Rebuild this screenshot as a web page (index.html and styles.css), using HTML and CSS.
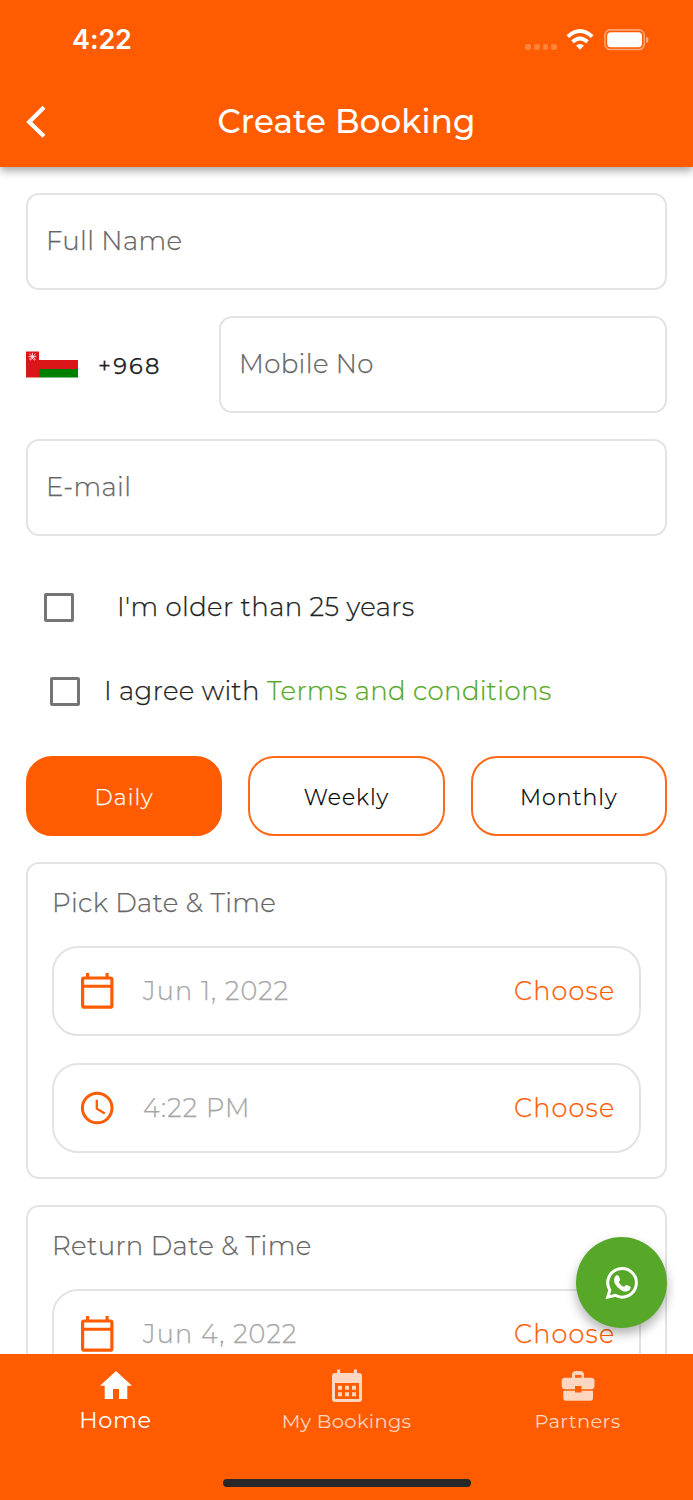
FILE: index.html
```
<!DOCTYPE html>
<html lang="en">
<head>
<meta charset="utf-8">
<title>Create Booking</title>
<link rel="stylesheet" href="styles.css">
</head>
<body>
<div class="phone">
  <header class="header">
    <div class="status">
      <span class="clock">4:22</span>
      <div class="indicators">
        <span class="dots"><i></i><i></i><i></i><i></i></span>
        <svg class="wifi" width="28" height="21" viewBox="0 0 28 21" fill="#fff">
          <path d="M14 20.7 10 16.6Q14 13.4 18 16.6Z"/>
          <path d="M5.2 11.4Q14 3.4 22.8 11.4L20.1 14.2Q14 8.8 7.9 14.2Z"/>
          <path d="M.5 6.2Q14-6 27.5 6.2L24.8 8.9Q14-.7 3.2 8.9Z"/>
        </svg>
        <svg class="battery" width="45" height="22" viewBox="0 0 45 22">
          <rect x=".9" y=".9" width="39.4" height="19.6" rx="5.5" fill="none" stroke="#fff" stroke-opacity=".45" stroke-width="1.6"/>
          <rect x="3.2" y="3.2" width="34.8" height="15" rx="3.6" fill="#fff"/>
          <path d="M42 7.5q2.6 1 2.6 3.3T42 14Z" fill="#fff" fill-opacity=".5"/>
        </svg>
      </div>
    </div>
    <div class="titlebar">
      <svg class="back" width="20" height="34" viewBox="0 0 20 34" fill="none" stroke="#fff" stroke-width="4.2"><path d="M18 2.2 3.200 17 18 31.200"/></svg>
      <h1 class="title"><span>Create Booking</span></h1>
    </div>
  </header>

  <main class="content">
    <div class="field"><span>Full Name</span></div>
    <div class="mobile">
      <svg class="flag" width="52" height="27" viewBox="0 0 52 27">
        <path fill="#db161b" d="M0 .5h13V9h39v9H13v8.500H0z"/>
        <path fill="#008000" d="M13 18h39v8.500H13z"/>
        <g stroke="#fff" stroke-opacity=".85" stroke-width=".9" fill="none"><path d="M3.200 2.800 9.700 8.300M9.700 2.800 3.200 8.300M6.400 1.800v6M2.600 5.500h7.600M4 9.300l2.400-2L9 9.300"/></g>
      </svg>
      <span class="code">+968</span>
      <div class="field mobile-field"><span>Mobile No</span></div>
    </div>
    <div class="field"><span>E-mail</span></div>

    <label class="check check-age"><i class="box"></i><span>I'm older than 25 years</span></label>
    <label class="check check-terms"><i class="box"></i><span class="agree">I agree with</span><span class="terms">Terms and conditions</span></label>

    <div class="periods">
      <button class="period active">Daily</button>
      <button class="period">Weekly</button>
      <button class="period">Monthly</button>
    </div>

    <section class="card">
      <h2 class="card-title">Pick Date &amp; Time</h2>
      <div class="slot">
        <svg class="slot-icon" width="34" height="38" viewBox="0 0 34 38"><rect fill="none" stroke="#ff5b00" stroke-width="3.200" x="2.600" y="6" width="29.300" height="29.200" rx="1.500"/><path fill="#ff5b00" d="M6 1h3.200v4H6zM25.500 1h3.200v4h-3.200zM2.500 12.700h29v3h-29z"/></svg>
        <span class="value">Jun 1, 2022</span><span class="choose">Choose</span>
      </div>
      <div class="slot">
        <svg class="slot-icon" width="34" height="38" viewBox="0 0 34 38" fill="none" stroke="#ff5b00"><circle cx="17.200" cy="19" r="14.800" stroke-width="3"/><path stroke-width="2.300" d="M16.800 10.700v9l8 4.800"/></svg>
        <span class="value">4:22 PM</span><span class="choose">Choose</span>
      </div>
    </section>

    <section class="card">
      <h2 class="card-title">Return Date &amp; Time</h2>
      <div class="slot">
        <svg class="slot-icon" width="34" height="38" viewBox="0 0 34 38"><rect fill="none" stroke="#ff5b00" stroke-width="3.200" x="2.600" y="6" width="29.300" height="29.200" rx="1.500"/><path fill="#ff5b00" d="M6 1h3.200v4H6zM25.500 1h3.200v4h-3.200zM2.500 12.700h29v3h-29z"/></svg>
        <span class="value">Jun 4, 2022</span><span class="choose">Choose</span>
      </div>
    </section>
  </main>

  <nav class="nav">
    <div class="tabs">
      <a class="tab current">
        <svg width="32" height="34" viewBox="0 0 32 34" fill="#fff"><path d="M16 3 32 17.700h-4.700V31H19V21h-6v10H4.700V17.700H0Z"/></svg>
        <span>Home</span>
      </a>
      <a class="tab">
        <svg width="32" height="34" viewBox="0 0 32 34" fill="#ffd6bf"><path fill-rule="evenodd" d="M6 1.500h3.200V5h13.600V1.500H26V5h2q3 0 3 3v23q0 3-3 3H4q-3 0-3-3V8q0-3 3-3h2ZM4 15v16h24V15Z"/><path d="M7 17.700h4v4H7zM14 17.700h4v4h-4zM21 17.700h4v4h-4zM7 24.200h4v4H7zM14 24.200h4v4h-4zM21 24.200h4v4h-4z"/></svg>
        <span>My Bookings</span>
      </a>
      <a class="tab">
        <svg width="34" height="34" viewBox="0 0 34 34" fill="#ffd6bf"><path fill-rule="evenodd" d="M11 9.800V7q0-4 4-4h4q4 0 4 4v2.800h7q3.500 0 3.500 3v5q0 3.500-3.500 3.500h-9.500V18h-6.500v3.300H4.200Q.7 21.300.7 17.800v-5q0-3 3.500-3ZM14 9.800h6.500V7H14Z"/><path d="M2.300 22.700h11.700v1.800h6.500v-1.800H32v7.300q0 2.800-2.800 2.800h-24q-2.900 0-2.900-2.800Z"/></svg>
        <span>Partners</span>
      </a>
    </div>
    <div class="home-bar"></div>
  </nav>

  <div class="fab">
    <svg width="34" height="34" viewBox="0 0 34 34"><path fill="none" stroke="#fff" stroke-width="3" d="M2.700 31.200 4.800 24.100A14.300 14.300 0 1 1 10.200 29.300Z"/><path fill="#fff" d="M11.400 9.300h1.400q.6 0 .9.700l1.400 3.300q.3.700-.2 1.300l-1.200 1.600q1.900 3.400 5.400 4.900l1.500-1.800q.5-.6 1.200-.3l3.300 1.600q.6.300.5 1-.3 3.500-4.500 4-3.700.2-8.200-4.200-4-3.900-4-7.500 0-2.800 2.500-4.600Z"/></svg>
  </div>
</div>
</body>
</html>
```
FILE: styles.css
```
* { box-sizing: border-box; }
body { margin: 0; background: #fff; }
.phone {
  position: relative;
  display: flex;
  flex-direction: column;
  width: 693px;
  height: 1500px;
  overflow: hidden;
  font-family: Montserrat, Inter, sans-serif;
  font-size: 26px;
  font-weight: 300;
  line-height: 32px;
  color: #212121;
  letter-spacing: .36px;
  white-space: nowrap;
}
.header {
  flex: none;
  height: 167px;
  background: #ff5b00;
  color: #fff;
  box-shadow: 0 4px 8px rgba(0, 0, 0, .34);
  z-index: 1;
}
.status {
  display: flex;
  justify-content: space-between;
  height: 78px;
  padding: 24px 44px 0 72px;
}
.clock { font-family: Inter, sans-serif; font-size: 27px; font-weight: 600; letter-spacing: -.1px; }
.indicators { display: flex; align-items: flex-start; padding-top: 5px; }
.dots { display: flex; gap: 3px; margin: 15px 9px 0 0; }
.dots i { width: 5.7px; height: 5.7px; border-radius: 2px; background: rgba(255, 255, 255, .24); }
.wifi { margin-right: 10px; }
.titlebar { display: flex; align-items: center; height: 88px; padding: 0 26px; }
.title { flex: 1; margin: 0 20px 0 0; text-align: center; font-size: 32.5px; font-weight: 500; line-height: 40px; letter-spacing: .15px; }
.content {
  flex: 1;
  min-height: 0;
  overflow: hidden;
  display: flex;
  flex-direction: column;
  padding: 26px 26px 0;
  -webkit-text-stroke-width: .25px;
}
.field {
  flex: none;
  height: 97px;
  border: 2px solid #e3e3e3;
  border-radius: 13px;
  padding: 30px 18px;
  margin-bottom: 26px;
  color: #666;
}
.mobile { display: flex; align-items: center; height: 97px; margin-bottom: 26px; }
.flag { flex: none; }
.code { width: 141px; padding: 2px 0 0 20px; font-size: 22.5px; font-weight: 400; letter-spacing: 2.2px; }
.mobile-field { flex: 1; margin-bottom: 0; }
.check { flex: none; display: flex; align-items: center; height: 84px; }
.check-age { padding-left: 18px; margin-top: 3px; }
.check-terms { padding-left: 24px; }
.box { width: 30px; height: 29px; border: 3px solid #757575; border-radius: 2px; }
.check-age .box { margin-right: 43px; }
.check-terms .box { margin-right: 24px; }
.agree { width: 163px; }
.terms { color: #57a829; }
.periods { flex: none; display: grid; grid-template-columns: repeat(3, 1fr); gap: 26px; height: 80px; margin: 23px 0 26px; }
.period {
  border: 2px solid #ff6a18;
  border-radius: 26px;
  background: #fff;
  color: #000;
  font: inherit;
  font-size: 22px;
  letter-spacing: 1.05px;
  padding: 4px 0 0;
}
.period.active { background: #ff5b00; border-color: #ff5b00; color: #fff; }
.card {
  flex: none;
  height: 317px;
  border: 2px solid #e3e3e3;
  border-radius: 13px;
  padding: 23px 24px 0;
  margin-bottom: 26px;
}
.card-title { margin: 0 0 27px; font-size: inherit; font-weight: 300; color: #666; }
.slot {
  display: flex;
  align-items: center;
  height: 90px;
  border: 2px solid #e3e3e3;
  border-radius: 26px;
  padding: 0 24px 0 26px;
  margin-bottom: 27px;
  font-size: 25.5px;
}
.slot-icon { flex: none; margin-right: 29px; }
.value { color: #a6a6a6; flex: 1; letter-spacing: 1.15px; }
.choose { width: 101px; color: #ff5b00; letter-spacing: 1.2px; }
.nav { flex: none; height: 146px; background: #ff5b00; color: #ffd6bf; z-index: 1; }
.tabs { display: grid; grid-template-columns: repeat(3, 1fr); height: 125px; }
.tab { display: flex; flex-direction: column; align-items: center; padding-top: 14px; font-size: 19.5px; font-weight: 400; letter-spacing: .3px; }
.tab span { margin-top: 3px; }
.tab.current { color: #fff; font-size: 22.5px; letter-spacing: .6px; }
.current span { margin-top: 2px; }
.home-bar { width: 248px; height: 8px; border-radius: 4px; background: #282828; margin: 0 auto; }
.fab {
  position: absolute;
  left: 576px;
  top: 1237px;
  width: 91px;
  height: 91px;
  border-radius: 50%;
  background: #57a829;
  box-shadow: 0 6px 11px rgba(0, 0, 0, .3);
  display: flex;
  align-items: center;
  justify-content: center;
}
```
